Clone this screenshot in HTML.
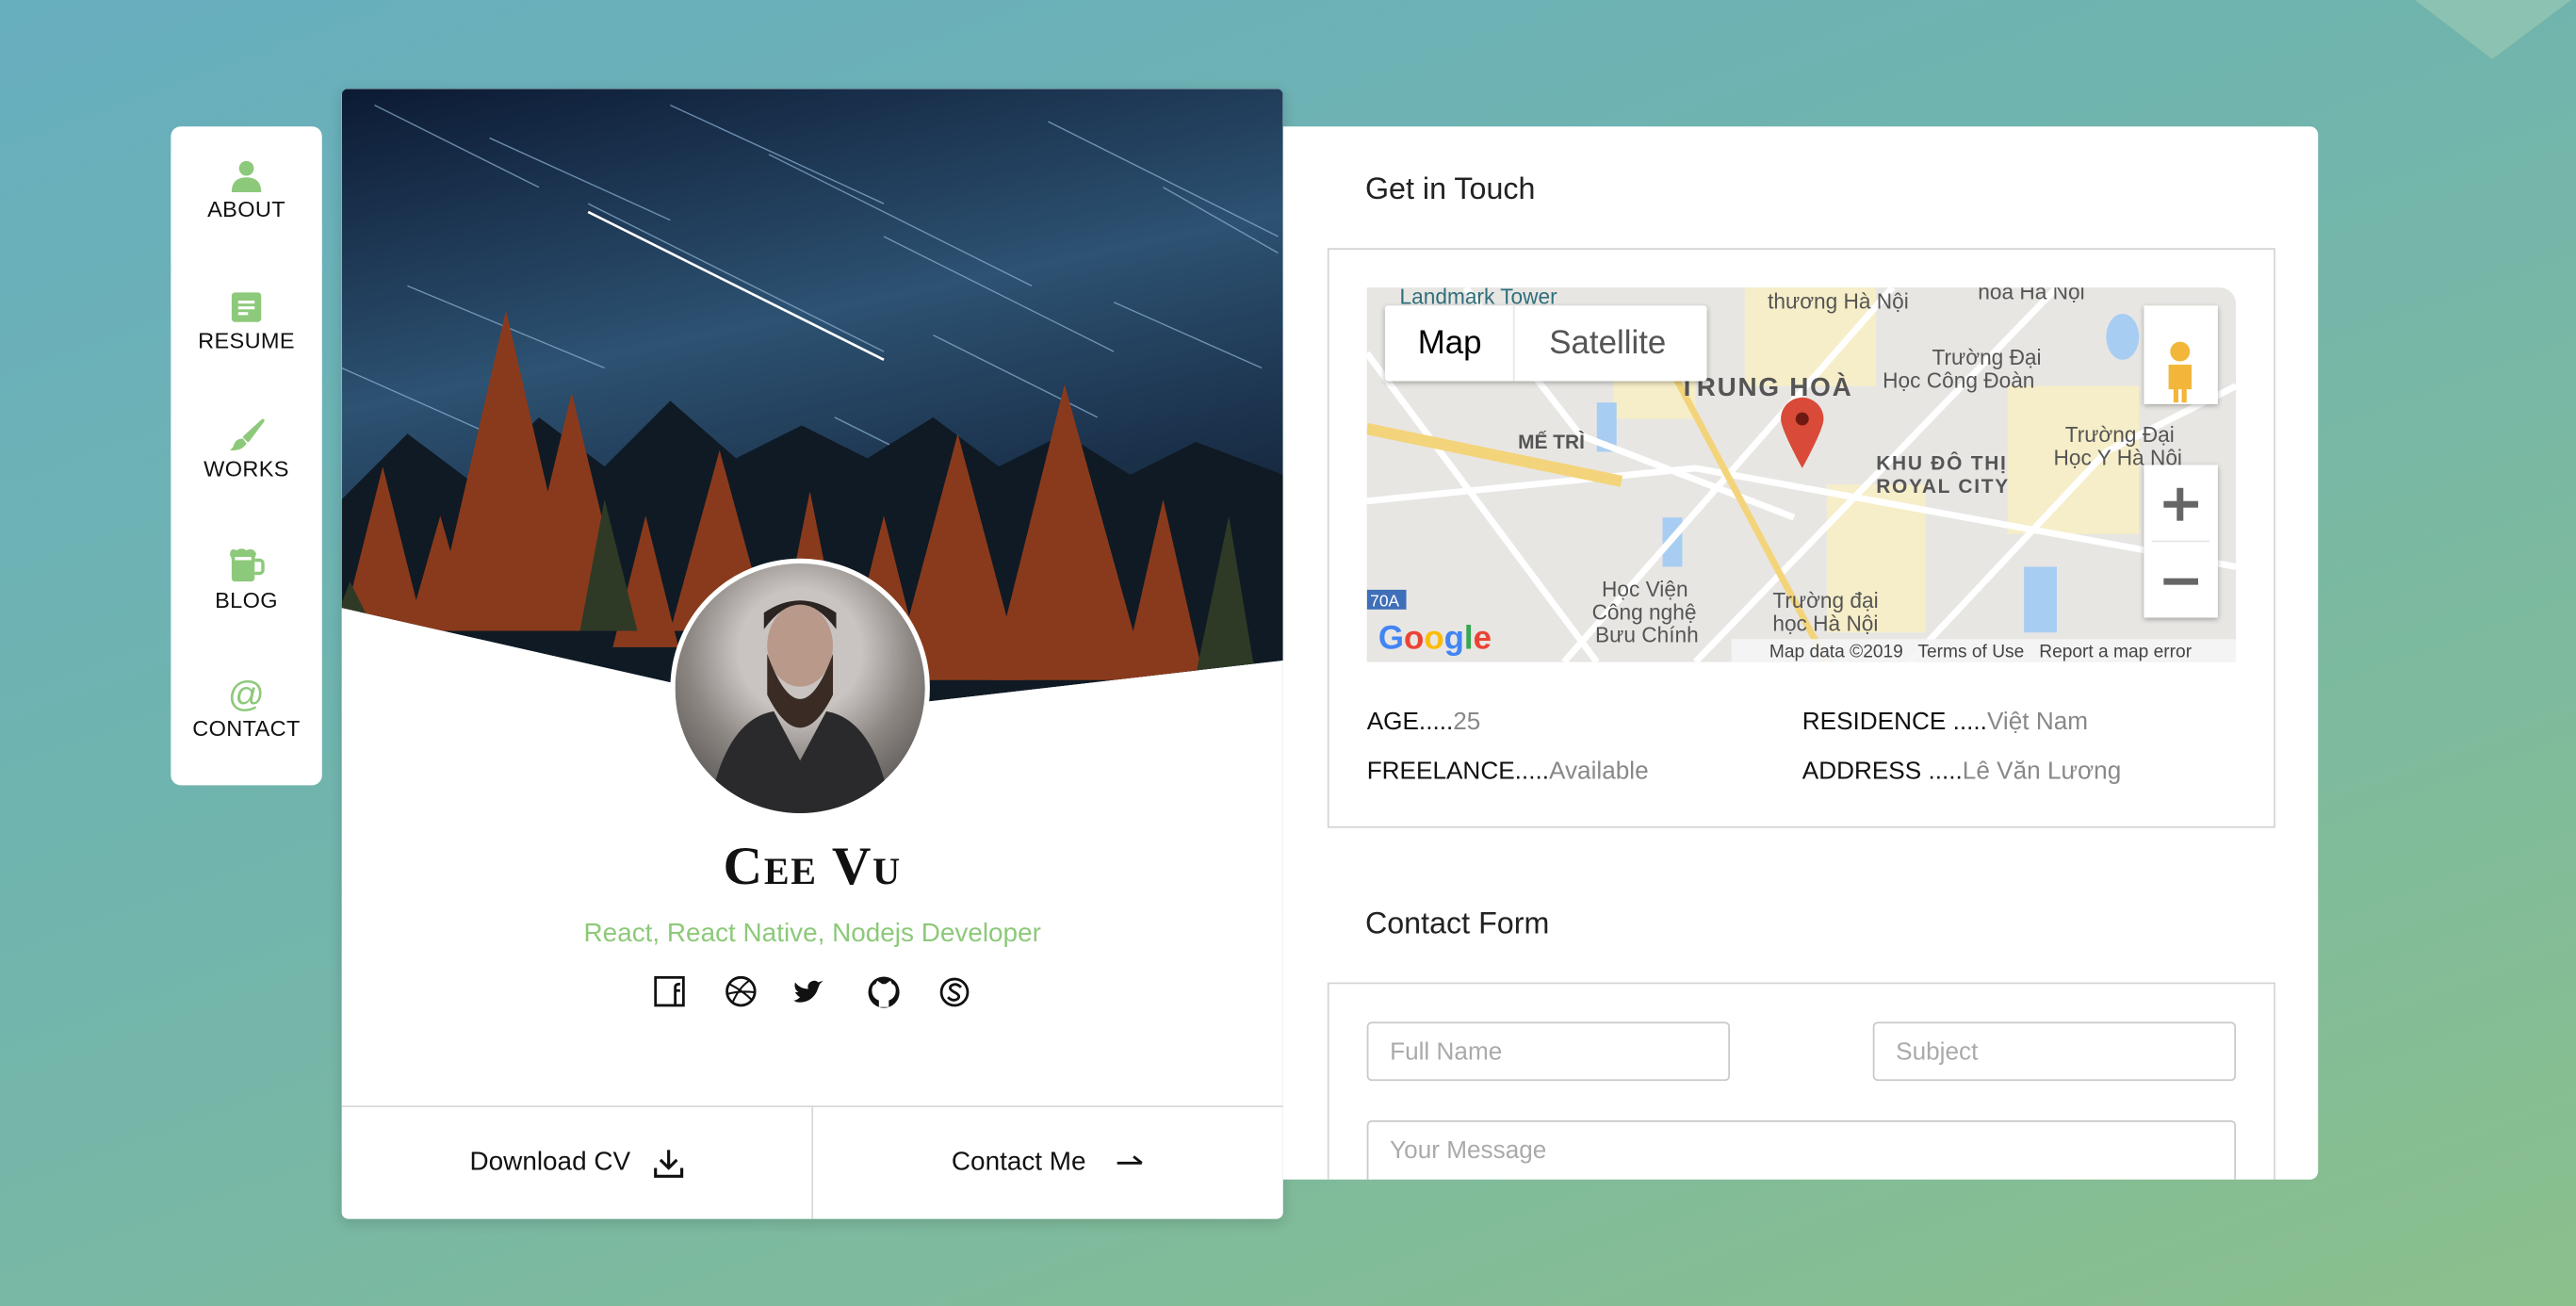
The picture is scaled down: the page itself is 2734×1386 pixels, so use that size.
<!DOCTYPE html>
<html><head><meta charset="utf-8">
<style>
html,body{margin:0;padding:0;width:2734px;height:1386px;overflow:hidden}
body{background:linear-gradient(160deg,#67aebf 0%,#72b5ac 45%,#8bc08c 100%);font-family:"Liberation Sans","Noto Sans CJK SC",sans-serif}
#w{position:absolute;left:0;top:0;width:1568px;height:795px;transform:scale(1.74362,1.7434);transform-origin:0 0}
.abs{position:absolute}
.side{left:104px;top:77px;width:92px;height:401px;background:#fff;border-radius:6px}
.nav{position:absolute;left:0;width:92px;text-align:center;font-size:13.5px;color:#111;letter-spacing:.2px}
.nav svg{display:block;margin:0 auto 3px}
.card{left:208px;top:54px;width:573px;height:688px;background:#fff;border-radius:4px;overflow:hidden;box-shadow:0 2px 8px rgba(0,0,0,.15)}
.panel{left:781px;top:77px;width:630px;height:641px;background:#fff;border-radius:0 5px 5px 0;overflow:hidden}
.h{font-size:18.5px;color:#222}
.box{border:1.5px solid #d4d4d4}
.inp{position:absolute;border:1px solid #c9c9c9;border-radius:3px;height:36px;font-size:15px;color:#aaa;line-height:36px;padding-left:13px;box-sizing:border-box}
.lab{font-size:15px;color:#111}
.lab span{color:#888}
.btn{position:absolute;top:620px;height:68px;display:flex;align-items:center;justify-content:center;font-size:16px;color:#111}
</style></head><body><div id="w">
<svg class="abs" style="left:1470px;top:0" width="95" height="36"><polygon points="0,0 95,0 47,36" fill="#9fcbb4" opacity=".6"/></svg>

<div class="abs side">
 <div class="nav" style="top:20px"><svg width="20" height="20" viewBox="0 0 20 20"><circle cx="10" cy="5.5" r="4.5" fill="#8dc97a"/><path d="M1 20 Q1 11 10 11 Q19 11 19 20Z" fill="#8dc97a"/></svg>ABOUT</div>
 <div class="nav" style="top:100px"><svg width="20" height="20" viewBox="0 0 20 20"><rect x="1" y="1" width="18" height="18" rx="2" fill="#8dc97a"/><rect x="5" y="6" width="10" height="1.8" fill="#fff"/><rect x="5" y="9.5" width="10" height="1.8" fill="#fff"/><rect x="5" y="13" width="6" height="1.8" fill="#fff"/></svg>RESUME</div>
 <div class="nav" style="top:178px"><svg width="22" height="20" viewBox="0 0 22 20"><path d="M21 1 L10 11 L12 13 Z" fill="#8dc97a" stroke="#8dc97a" stroke-width="2" stroke-linejoin="round"/><path d="M9 12 Q4 12 3 17 L1 19 Q8 20 11 15Z" fill="#8dc97a"/></svg>WORKS</div>
 <div class="nav" style="top:256px"><svg width="24" height="22" viewBox="0 0 24 22"><rect x="3" y="4" width="14" height="17" rx="2" fill="#8dc97a"/><path d="M17 8 h3 a2 2 0 0 1 2 2 v4 a2 2 0 0 1 -2 2 h-3" fill="none" stroke="#8dc97a" stroke-width="2"/><path d="M2 5 Q2 0 6 2 Q9 0 12 2 Q16 0 18 4 L17 7 H3Z" fill="#8dc97a"/><rect x="5" y="6" width="10" height="2" fill="#fff"/></svg>BLOG</div>
 <div class="nav" style="top:336px"><div style="color:#8dc97a;font-size:22px;line-height:20px;margin-bottom:3px">@</div>CONTACT</div>
</div>

<div class="abs card">
 <svg class="abs" style="left:0;top:0" width="573" height="400" viewBox="0 0 573 400">
  <defs><linearGradient id="sky" x1="0" y1="0" x2="0.3" y2="1"><stop offset="0" stop-color="#0c1a33"/><stop offset=".45" stop-color="#2d5272"/><stop offset=".7" stop-color="#1d3550"/><stop offset="1" stop-color="#0e1828"/></linearGradient>
  <clipPath id="cp"><polygon points="0,0 573,0 573,348 287,381 0,316"/></clipPath></defs>
  <g clip-path="url(#cp)">
   <rect width="573" height="400" fill="url(#sky)"/>
   <g stroke="#8fb4d8" stroke-width=".8" opacity=".7">
    <line x1="20" y1="10" x2="120" y2="60"/><line x1="150" y1="70" x2="330" y2="160"/><line x1="40" y1="120" x2="160" y2="170"/><line x1="260" y1="40" x2="420" y2="120"/><line x1="360" y1="150" x2="460" y2="200"/><line x1="430" y1="20" x2="570" y2="90"/><line x1="0" y1="170" x2="90" y2="210"/><line x1="300" y1="200" x2="400" y2="250"/><line x1="470" y1="130" x2="560" y2="170"/><line x1="90" y1="30" x2="200" y2="80"/><line x1="500" y1="60" x2="570" y2="100"/><line x1="200" y1="10" x2="330" y2="70"/><line x1="330" y1="90" x2="470" y2="160"/></g>
   <line x1="150" y1="75" x2="330" y2="165" stroke="#fff" stroke-width="1.5"/>
   <polygon points="0,250 40,210 80,240 120,200 160,230 200,190 240,225 280,205 320,225 360,200 400,230 440,210 480,235 520,215 573,235 573,400 0,400" fill="#0f1a24"/>
   <g fill="#8a3a1c">
    <polygon points="100,135 55,330 145,330"/><polygon points="140,185 105,330 175,330"/><polygon points="25,230 0,330 50,330"/><polygon points="60,260 40,330 80,330"/>
    <polygon points="375,210 335,360 415,360"/><polygon points="440,180 395,360 490,360"/><polygon points="285,245 262,360 308,360"/>
    <polygon points="230,220 200,330 260,330"/><polygon points="185,260 165,340 205,340"/><polygon points="330,260 305,360 355,360"/><polygon points="500,250 475,360 525,360"/></g>
   <g fill="#2e3a26"><polygon points="540,260 515,380 560,380"/><polygon points="160,250 145,330 180,330"/><polygon points="5,300 -10,340 25,340"/></g>
  </g>
 </svg>
 <div class="abs" style="left:200px;top:286px;width:152px;height:152px;border-radius:50%;border:3px solid #fff;background:radial-gradient(circle at 50% 35%,#c9c4c2 0 30%,#8c8682 55%,#3b3937 100%);overflow:hidden">
  <svg width="152" height="152"><ellipse cx="76" cy="50" rx="20" ry="25" fill="#b8998a"/><path d="M56 55 Q76 110 96 55 L96 80 Q76 120 56 80Z" fill="#3a2c24"/><path d="M54 40 Q76 10 98 40 L98 30 Q76 15 54 30Z" fill="#2b2420"/><path d="M20 152 Q30 95 60 90 L76 120 L92 90 Q122 95 132 152Z" fill="#2a2a2c"/></svg>
 </div>
 <div class="abs" style="left:0;width:573px;top:456px;text-align:center;font-family:'Liberation Serif',serif;font-weight:bold;font-variant:small-caps;font-size:33px;color:#111;letter-spacing:1px">Cee Vu</div>
 <div class="abs" style="left:0;width:573px;top:506px;text-align:center;font-size:16px;color:#8dc97a">React, React Native, Nodejs Developer</div>
 <svg class="abs" style="left:188px;top:539px" width="200" height="22" viewBox="0 0 200 22" fill="none" stroke="#111" stroke-width="1.6">
  <rect x="3" y="2" width="17" height="17"/><path d="M15 19 V10 H18 M15 10 V8 Q15 6 18 6" />
  <circle cx="55" cy="10.5" r="8.5"/><path d="M48 6 Q56 10 62 16 M50 17 Q54 8 60 4 M47 12 Q54 10 63 11" stroke-width="1.2"/>
  <path d="M89 17 Q97 18 101 11 L103 6 L105 4 L102 5 Q100 3 97 5 Q95 7 96 9 Q91 9 88 5 Q87 9 90 11 L88 11 Q89 13 91 14 Q89 16 87 16Z" fill="#111" stroke="none"/>
  <circle cx="142" cy="11" r="9.5" fill="#111" stroke="none"/><path d="M139 20 V16 Q136 15 135 12 Q134 7 137 6 L138 4 L141 6 H143 L146 4 L147 6 Q150 7 149 12 Q148 15 145 16 V20" fill="#fff" stroke="none"/>
  <circle cx="185" cy="11" r="8"/><path d="M189 8 Q186 5 183 7 Q181 9 185 11 Q189 13 187 15 Q184 17 181 14"/>
 </svg>
 <div class="abs" style="left:0;top:619px;width:573px;height:1px;background:#d8d8d8"></div>
 <div class="abs" style="left:286px;top:620px;width:1px;height:68px;background:#d8d8d8"></div>
 <div class="btn" style="left:0;width:287px">Download CV&nbsp;&nbsp;&nbsp;<svg width="20" height="18" viewBox="0 0 20 18" fill="none" stroke="#111" stroke-width="1.8"><path d="M10 1 V12 M5 7 L10 12 L15 7 M2 12 V17 H18 V12"/></svg></div>
 <div class="btn" style="left:287px;width:286px">Contact Me&nbsp;&nbsp;&nbsp;&nbsp;<svg width="18" height="12" viewBox="0 0 18 12" fill="none" stroke="#111" stroke-width="1.6"><path d="M1 6 H16 M11 2 L16 6"/></svg></div>
</div>

<div class="abs panel">
 <div class="abs h" style="left:50px;top:27px">Get in Touch</div>
 <div class="abs box" style="left:27px;top:74px;width:575px;height:351px"></div>
 <div class="abs" style="left:51px;top:98px;width:529px;height:228px;background:#e8e6e3;border-radius:0 10px 0 0;overflow:hidden">
  <svg width="529" height="228" style="position:absolute;left:0;top:0">
   <g fill="#f6eec8"><rect x="230" y="0" width="80" height="60"/><rect x="280" y="120" width="60" height="90"/><rect x="390" y="60" width="80" height="90"/><rect x="150" y="40" width="50" height="40"/></g>
   <g fill="#a8cdf2"><rect x="180" y="140" width="12" height="30"/><rect x="400" y="170" width="20" height="40"/><rect x="140" y="70" width="12" height="30"/><ellipse cx="460" cy="30" rx="10" ry="14"/></g>
   <g stroke="#fff" stroke-width="4" fill="none"><path d="M0 130 L200 110 L529 170"/><path d="M120 228 L320 0"/><path d="M200 228 L420 0"/><path d="M330 228 L450 100 L529 60"/><path d="M0 40 L140 228"/><path d="M60 0 L130 90 L260 140"/></g>
   <path d="M0 86 L155 118" stroke="#f3d47a" stroke-width="7"/>
   <path d="M180 40 L280 228" stroke="#f3d47a" stroke-width="4"/>
   <path d="M265 110 Q252 86 252 80 A13 13 0 1 1 278 80 Q278 86 265 110Z" fill="#d94a38"/><circle cx="265" cy="80" r="4" fill="#6e1a12"/>
   <g font-family="Liberation Sans,sans-serif" fill="#555" font-size="13"><text x="20" y="10" fill="#2f6f7b">Landmark Tower</text><text x="244" y="13">thương Hà Nội</text><text x="372" y="7">hoa Hà Nội</text><text x="344" y="47">Trường Đại</text><text x="314" y="61">Học Công Đoàn</text><text x="425" y="94">Trường Đại</text><text x="418" y="108">Học Y Hà Nội</text><text x="143" y="188">Học Viện</text><text x="137" y="202">Công nghệ</text><text x="139" y="216">Bưu Chính</text><text x="247" y="195">Trường đại</text><text x="247" y="209">học Hà Nội</text>
   <text x="190" y="66" font-weight="bold" font-size="16" letter-spacing="1">TRUNG HOÀ</text><text x="92" y="98" font-weight="bold" font-size="12">MẾ TRÌ</text><text x="310" y="111" font-weight="bold" font-size="12" letter-spacing="1">KHU ĐÔ THỊ</text><text x="310" y="125" font-weight="bold" font-size="12" letter-spacing="1">ROYAL CITY</text>
   <text x="7" y="220" font-size="20" font-weight="bold" fill="#4285f4">G<tspan fill="#ea4335">o</tspan><tspan fill="#fbbc05">o</tspan><tspan fill="#4285f4">g</tspan><tspan fill="#34a853">l</tspan><tspan fill="#ea4335">e</tspan></text></g>
   <rect x="0" y="184" width="24" height="12" fill="#3e6fb8"/><text x="2" y="194" font-size="10" fill="#fff" font-family="Liberation Sans">70A</text>
   <rect x="222" y="214" width="307" height="14" fill="#f5f5f5" opacity=".9"/>
   <text x="245" y="225" font-size="11" fill="#444" font-family="Liberation Sans">Map data ©2019 &nbsp; Terms of Use &nbsp; Report a map error</text>
  </svg>
  <div class="abs" style="left:11px;top:11px;width:196px;height:46px;background:#fff;box-shadow:0 1px 3px rgba(0,0,0,.3);border-radius:2px;font-size:20px;line-height:46px"><span style="position:absolute;left:20px;color:#000">Map</span><span style="position:absolute;left:78px;top:0;height:46px;border-left:1px solid #e6e6e6"></span><span style="position:absolute;left:100px;color:#555">Satellite</span></div>
  <div class="abs" style="left:473px;top:11px;width:45px;height:60px;background:#fff;box-shadow:0 1px 3px rgba(0,0,0,.3)"><svg width="45" height="60"><circle cx="22" cy="28" r="6" fill="#f2b73a"/><path d="M15 36 h14 v15 h-3 v8 h-3 v-8 h-2 v8 h-3 v-8 h-3z" fill="#f2b73a"/></svg></div>
  <div class="abs" style="left:473px;top:108px;width:45px;height:93px;background:#fff;box-shadow:0 1px 3px rgba(0,0,0,.3)"><div style="position:absolute;left:12px;top:22px;width:21px;height:4px;background:#666"></div><div style="position:absolute;left:20px;top:14px;width:4px;height:20px;background:#666"></div><div style="position:absolute;left:5px;top:46px;width:35px;height:1px;background:#e6e6e6"></div><div style="position:absolute;left:12px;top:69px;width:21px;height:4px;background:#666"></div></div>
 </div>
 <div class="abs lab" style="left:51px;top:354px">AGE.....<span>25</span></div>
 <div class="abs lab" style="left:316px;top:354px">RESIDENCE .....<span>Việt Nam</span></div>
 <div class="abs lab" style="left:51px;top:384px">FREELANCE.....<span>Available</span></div>
 <div class="abs lab" style="left:316px;top:384px">ADDRESS .....<span>Lê Văn Lương</span></div>
 <div class="abs h" style="left:50px;top:474px">Contact Form</div>
 <div class="abs box" style="left:27px;top:521px;width:575px;height:140px;border-bottom:none"></div>
 <div class="inp" style="left:51px;top:545px;width:221px">Full Name</div>
 <div class="inp" style="left:359px;top:545px;width:221px">Subject</div>
 <div class="inp" style="left:51px;top:605px;width:529px;height:50px;line-height:36px">Your Message</div>
</div>
</div></body></html>
